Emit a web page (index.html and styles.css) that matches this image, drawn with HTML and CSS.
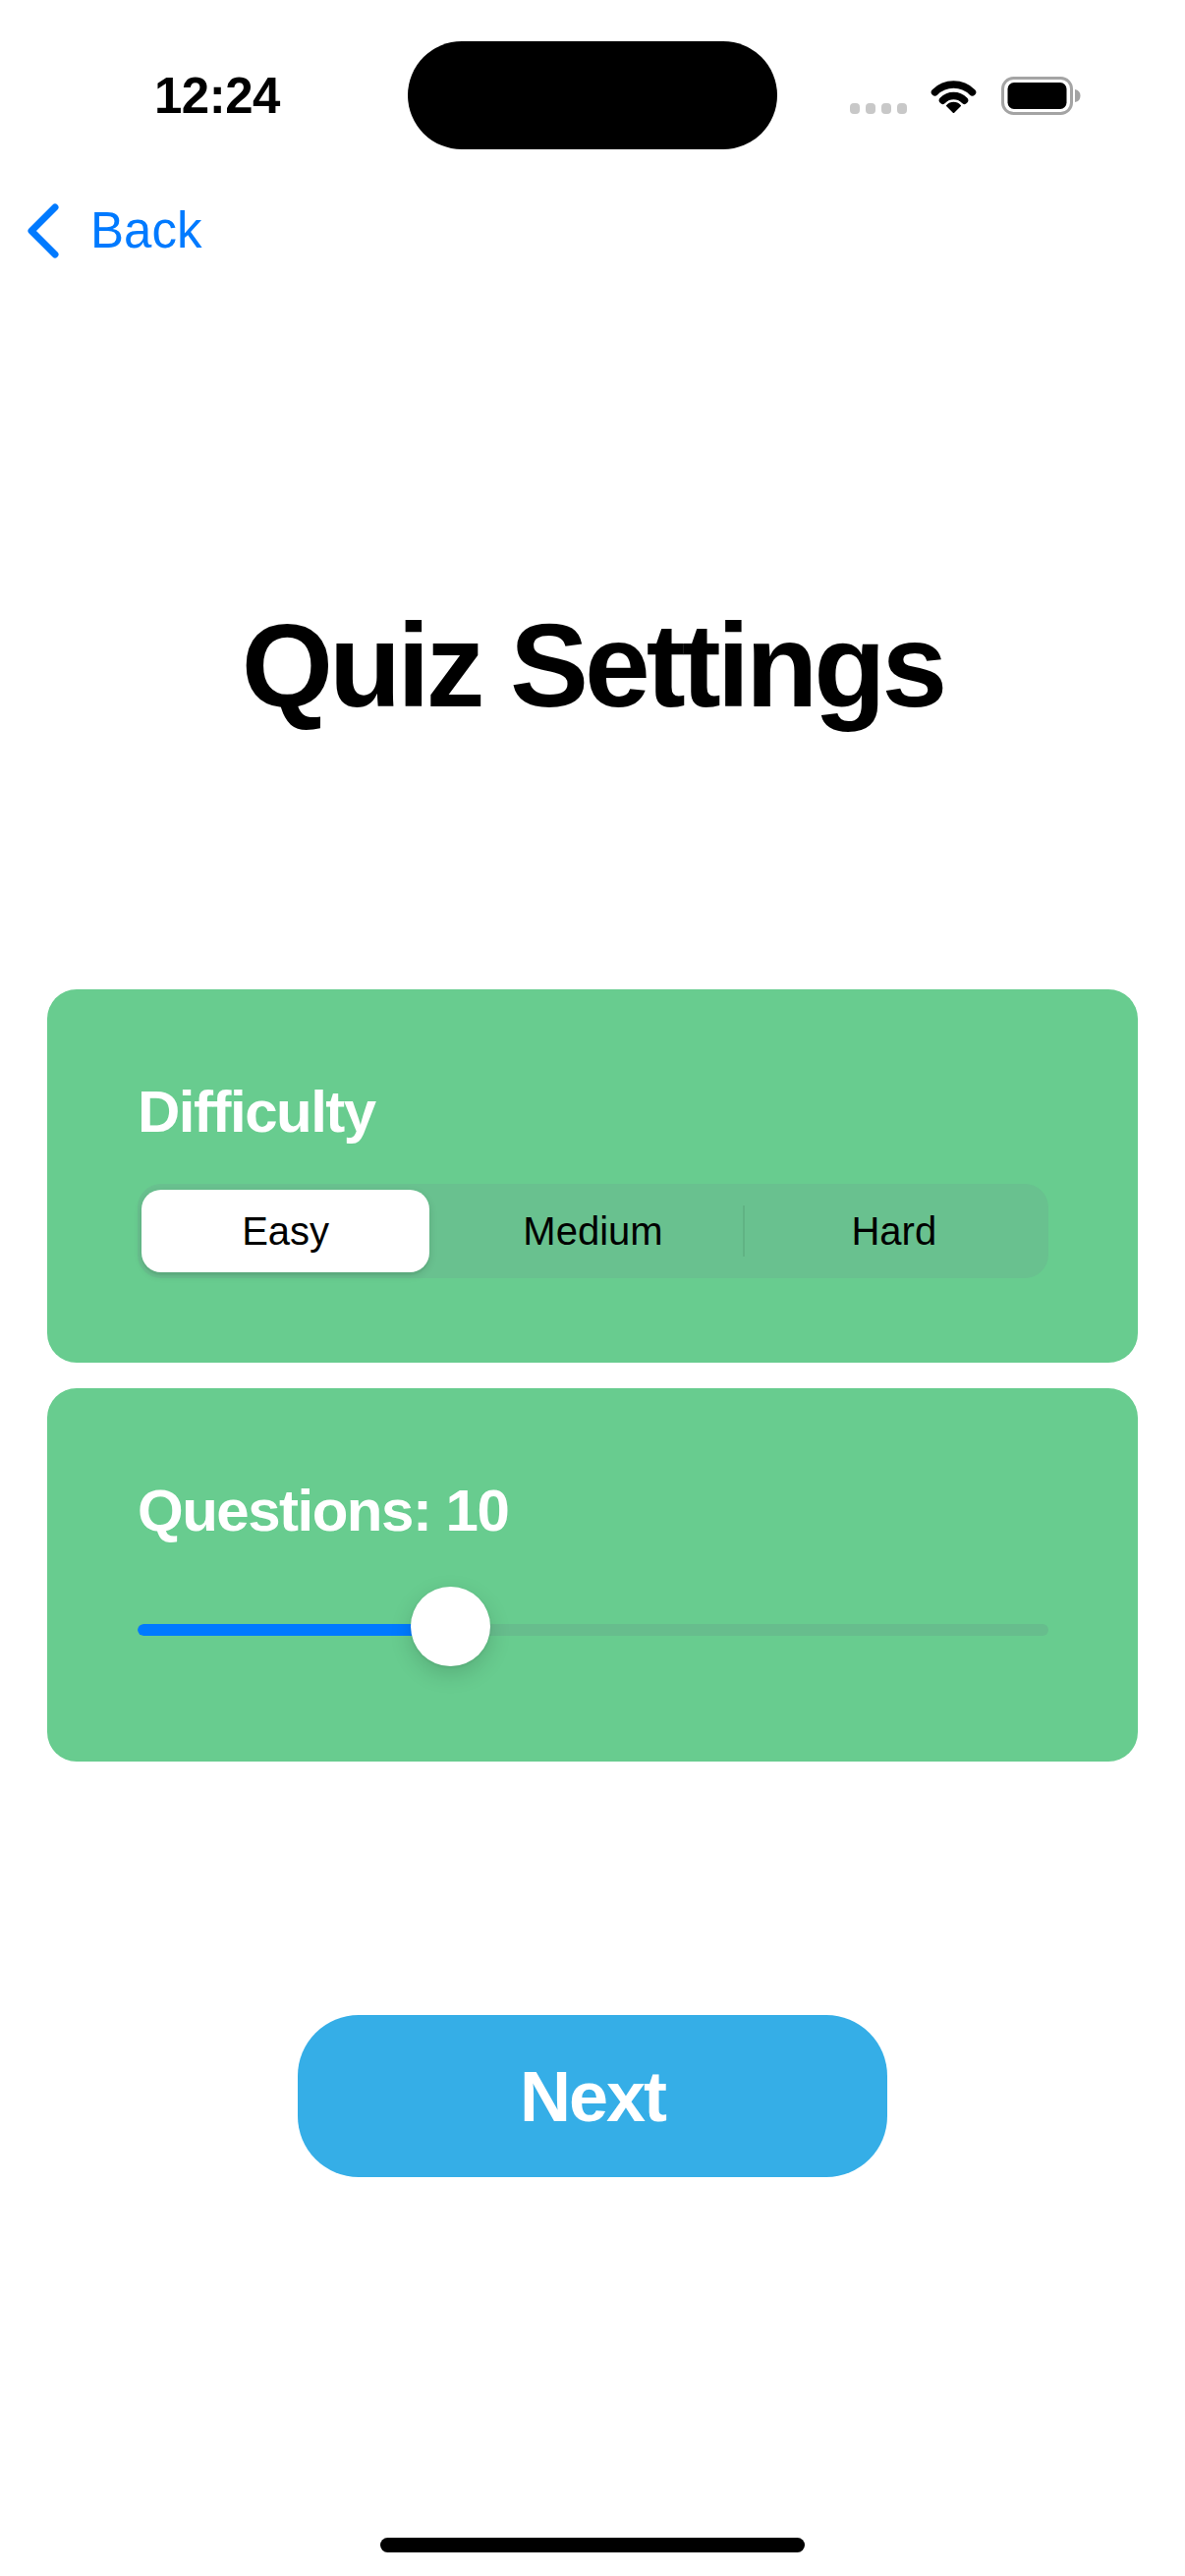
FILE: index.html
```html
<!DOCTYPE html>
<html lang="en">
<head>
<meta charset="utf-8">
<title>Quiz Settings</title>
<link rel="stylesheet" href="styles.css">
</head>
<body>
<div class="screen">
  <div class="status">
    <div class="status-left"><span class="time">12:24</span></div>
    <div class="island"></div>
    <div class="status-right">
      <div class="signal"><i></i><i></i><i></i><i></i></div>
      <svg class="wifi" width="51" height="36" viewBox="0 0 51 36">
        <path d="M6.5 14.8 A27 27 0 0 1 44.5 14.8" fill="none" stroke="#000" stroke-width="7.5" stroke-linecap="round"/>
        <path d="M14.5 23.2 A15.5 15.5 0 0 1 36.5 23.2" fill="none" stroke="#000" stroke-width="7.5" stroke-linecap="round"/>
        <path d="M25.5 35 L19 28.6 A9 9 0 0 1 32 28.6 Z" fill="#000" stroke="#000" stroke-width="2" stroke-linejoin="round"/>
      </svg>
      <svg class="battery" width="82" height="39" viewBox="0 0 82 39">
        <rect x="1.5" y="1.5" width="70" height="36" rx="11" fill="none" stroke="#a4a4a4" stroke-width="3"/>
        <rect x="6.5" y="6" width="60" height="27" rx="6.5" fill="#000"/>
        <path d="M75 13 Q80.5 14 80.5 19.5 Q80.5 25 75 26 Z" fill="#a4a4a4"/>
      </svg>
    </div>
  </div>

  <div class="nav">
    <svg class="chevron" width="34" height="56" viewBox="0 0 34 56">
      <polyline points="29,4 5,28 29,52" fill="none" stroke="#007aff" stroke-width="7" stroke-linecap="round" stroke-linejoin="round"/>
    </svg>
    <span class="back-label">Back</span>
  </div>

  <h1 class="title">Quiz Settings</h1>

  <div class="card">
    <div class="card-label">Difficulty</div>
    <div class="segmented">
      <div class="segment selected">Easy</div>
      <div class="segment">Medium</div>
      <div class="segment divided">Hard</div>
    </div>
  </div>

  <div class="card second">
    <div class="card-label">Questions: 10</div>
    <div class="slider">
      <div class="track"><div class="fill" style="width: 318px"></div></div>
      <div class="thumb" style="left: 278px"></div>
    </div>
  </div>

  <div class="button-row">
    <div class="next-button">Next</div>
  </div>

  <div class="home-row"><div class="home-indicator"></div></div>
</div>
</body>
</html>
```
FILE: styles.css
```css
html, body {
  margin: 0;
  padding: 0;
  background: #ffffff;
}

body {
  font-family: "Liberation Sans", Arial, sans-serif;
  color: #000;
}

.screen {
  width: 1206px;
  height: 2622px;
  overflow: hidden;
  display: flex;
  flex-direction: column;
}

/* Status bar */
.status {
  display: flex;
  align-items: center;
  padding-top: 42px;
  height: 110px;
}

.status-left {
  width: 415px;
  box-sizing: border-box;
  padding-left: 157px;
}

.time {
  font-size: 51px;
  font-weight: 700;
  letter-spacing: -0.5px;
  line-height: 1;
  display: inline-block;
}

.island {
  width: 376px;
  height: 110px;
  border-radius: 55px;
  background: #000;
}

.status-right {
  display: flex;
  align-items: center;
  padding-left: 74px;
}

.signal {
  display: flex;
  align-items: flex-end;
  gap: 6px;
  height: 37px;
  margin-right: 22px;
}

.signal i {
  display: block;
  width: 10px;
  height: 11px;
  border-radius: 4px;
  background: #c8c8c8;
}

.wifi {
  display: block;
  margin-right: 23px;
}

.battery {
  display: block;
}

/* Nav */
.nav {
  display: flex;
  align-items: center;
  height: 70px;
  margin-top: 48px;
  padding-left: 27px;
  gap: 31px;
}

.chevron {
  display: block;
}

.back-label {
  font-size: 51px;
  line-height: 70px;
  color: #007aff;
}

/* Title */
.title {
  margin: 335px 0 0;
  text-align: center;
  font-size: 120px;
  line-height: 144px;
  font-weight: 700;
  letter-spacing: -4px;
}

/* Cards */
.card {
  margin: 258px 48px 0;
  height: 380px;
  box-sizing: border-box;
  padding: 89px 91px 0 92px;
  background: #68cc8f;
  border-radius: 30px;
}

.card.second {
  margin-top: 26px;
}

.card-label {
  font-size: 60px;
  line-height: 72px;
  font-weight: 700;
  color: #ffffff;
  letter-spacing: -1.5px;
}

/* Segmented control */
.segmented {
  margin-top: 37px;
  height: 96px;
  box-sizing: border-box;
  padding: 6px 4px;
  border-radius: 24px;
  background: #69c18f;
  display: grid;
  grid-template-columns: 1fr 1fr 1fr;
}

.segment {
  position: relative;
  display: flex;
  align-items: center;
  justify-content: center;
  font-size: 40px;
  color: #000;
}

.segment.selected {
  background: #ffffff;
  border-radius: 20px;
  margin-right: 13px;
  box-shadow: 0 3px 8px rgba(0, 0, 0, 0.12), 0 3px 1px rgba(0, 0, 0, 0.04);
}

.segment.divided::before {
  content: "";
  position: absolute;
  left: -1px;
  top: 16px;
  width: 2px;
  height: 52px;
  background: rgba(0, 0, 0, 0.07);
}

/* Slider */
.slider {
  position: relative;
  margin-top: 41px;
  height: 81px;
  display: flex;
  align-items: center;
}

.track {
  flex: 1;
  height: 12px;
  margin-top: 6px;
  border-radius: 6px;
  background: #67bd8d;
  overflow: hidden;
}

.fill {
  height: 100%;
  background: #007aff;
  border-radius: 6px 0 0 6px;
}

.thumb {
  position: absolute;
  top: 0;
  width: 81px;
  height: 81px;
  border-radius: 50%;
  background: #ffffff;
  box-shadow: 0 8px 22px rgba(0, 0, 0, 0.15), 0 1px 3px rgba(0, 0, 0, 0.08);
}

/* Next button */
.button-row {
  display: flex;
  justify-content: center;
  margin-top: 258px;
}

.next-button {
  width: 600px;
  height: 165px;
  border-radius: 62px;
  background: #35aee7;
  color: #ffffff;
  font-size: 72px;
  font-weight: 700;
  letter-spacing: -2px;
  display: flex;
  align-items: center;
  justify-content: center;
}

/* Home indicator */
.home-row {
  display: flex;
  justify-content: center;
  margin-top: 367px;
}

.home-indicator {
  width: 432px;
  height: 15px;
  border-radius: 8px;
  background: #000;
}
```
